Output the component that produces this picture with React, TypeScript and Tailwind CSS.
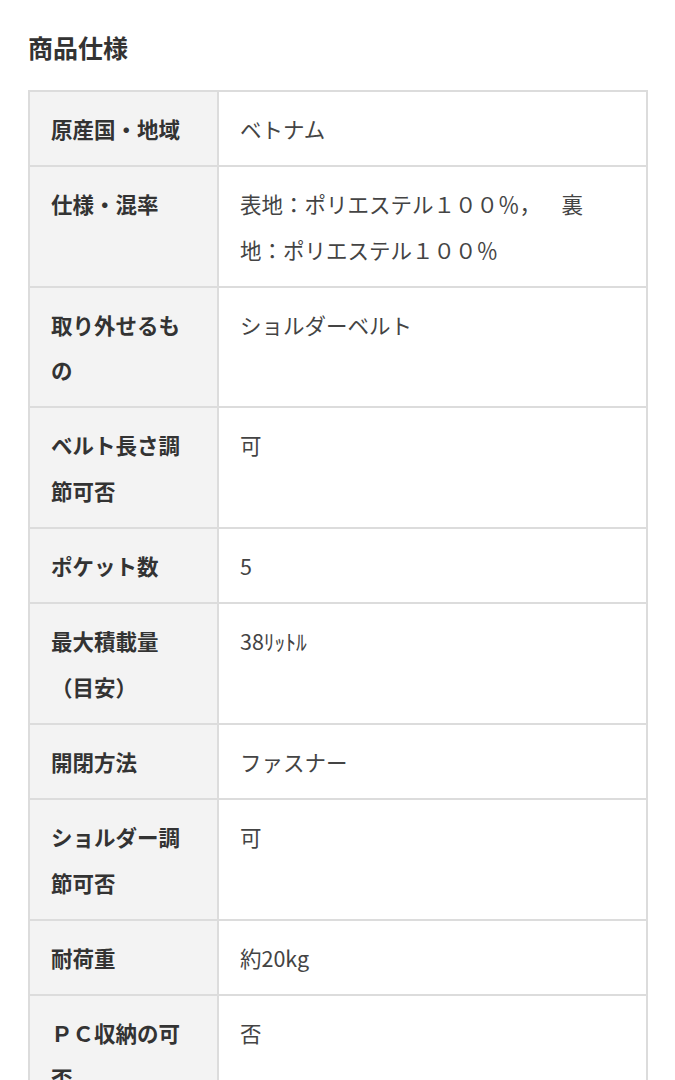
import React from "react";

const rows: [string, React.ReactNode][] = [
  ["原産国・地域", "ベトナム"],
  [
    "仕様・混率",
    <>
      表地：ポリエステル１００％，　{"\u00a0\u00a0"}裏
      <br />
      地：ポリエステル１００％
    </>,
  ],
  ["取り外せるもの", "ショルダーベルト"],
  ["ベルト長さ調節可否", "可"],
  ["ポケット数", "5"],
  ["最大積載量（目安）", "38ﾘｯﾄﾙ"],
  ["開閉方法", "ファスナー"],
  ["ショルダー調節可否", "可"],
  ["耐荷重", "約20kg"],
  ["ＰＣ収納の可否", "否"],
];

export default function App() {
  return (
    <div
      className="bg-white w-[675px] h-[1080px] overflow-hidden"
      style={{ fontFamily: '"Noto Sans CJK JP", "Noto Sans", sans-serif' }}
    >
      <div className="pl-[28px] pr-[28px] pt-[29px]">
        <h2 className="text-[25px] leading-[36px] font-bold text-[#333]">商品仕様</h2>
        <table className="mt-[25px] w-[620px] border-collapse border-2 border-[#dcdcdc] table-fixed">
          <tbody>
            {rows.map(([k, v], i) => (
              <tr key={i}>
                <th className="w-[189px] bg-[#f3f3f3] border-2 border-[#dcdcdc] text-left align-top font-bold text-[#333] text-[21.5px] leading-[45.3px] pt-[14px] pb-[14px] pl-[21px] pr-[22px] break-all">
                  {k}
                </th>
                <td className="border-2 border-[#dcdcdc] text-left align-top text-[#444] text-[21.5px] leading-[45.3px] pt-[14px] pb-[14px] pl-[21px] pr-[22px] break-all">
                  {v}
                </td>
              </tr>
            ))}
          </tbody>
        </table>
      </div>
    </div>
  );
}
